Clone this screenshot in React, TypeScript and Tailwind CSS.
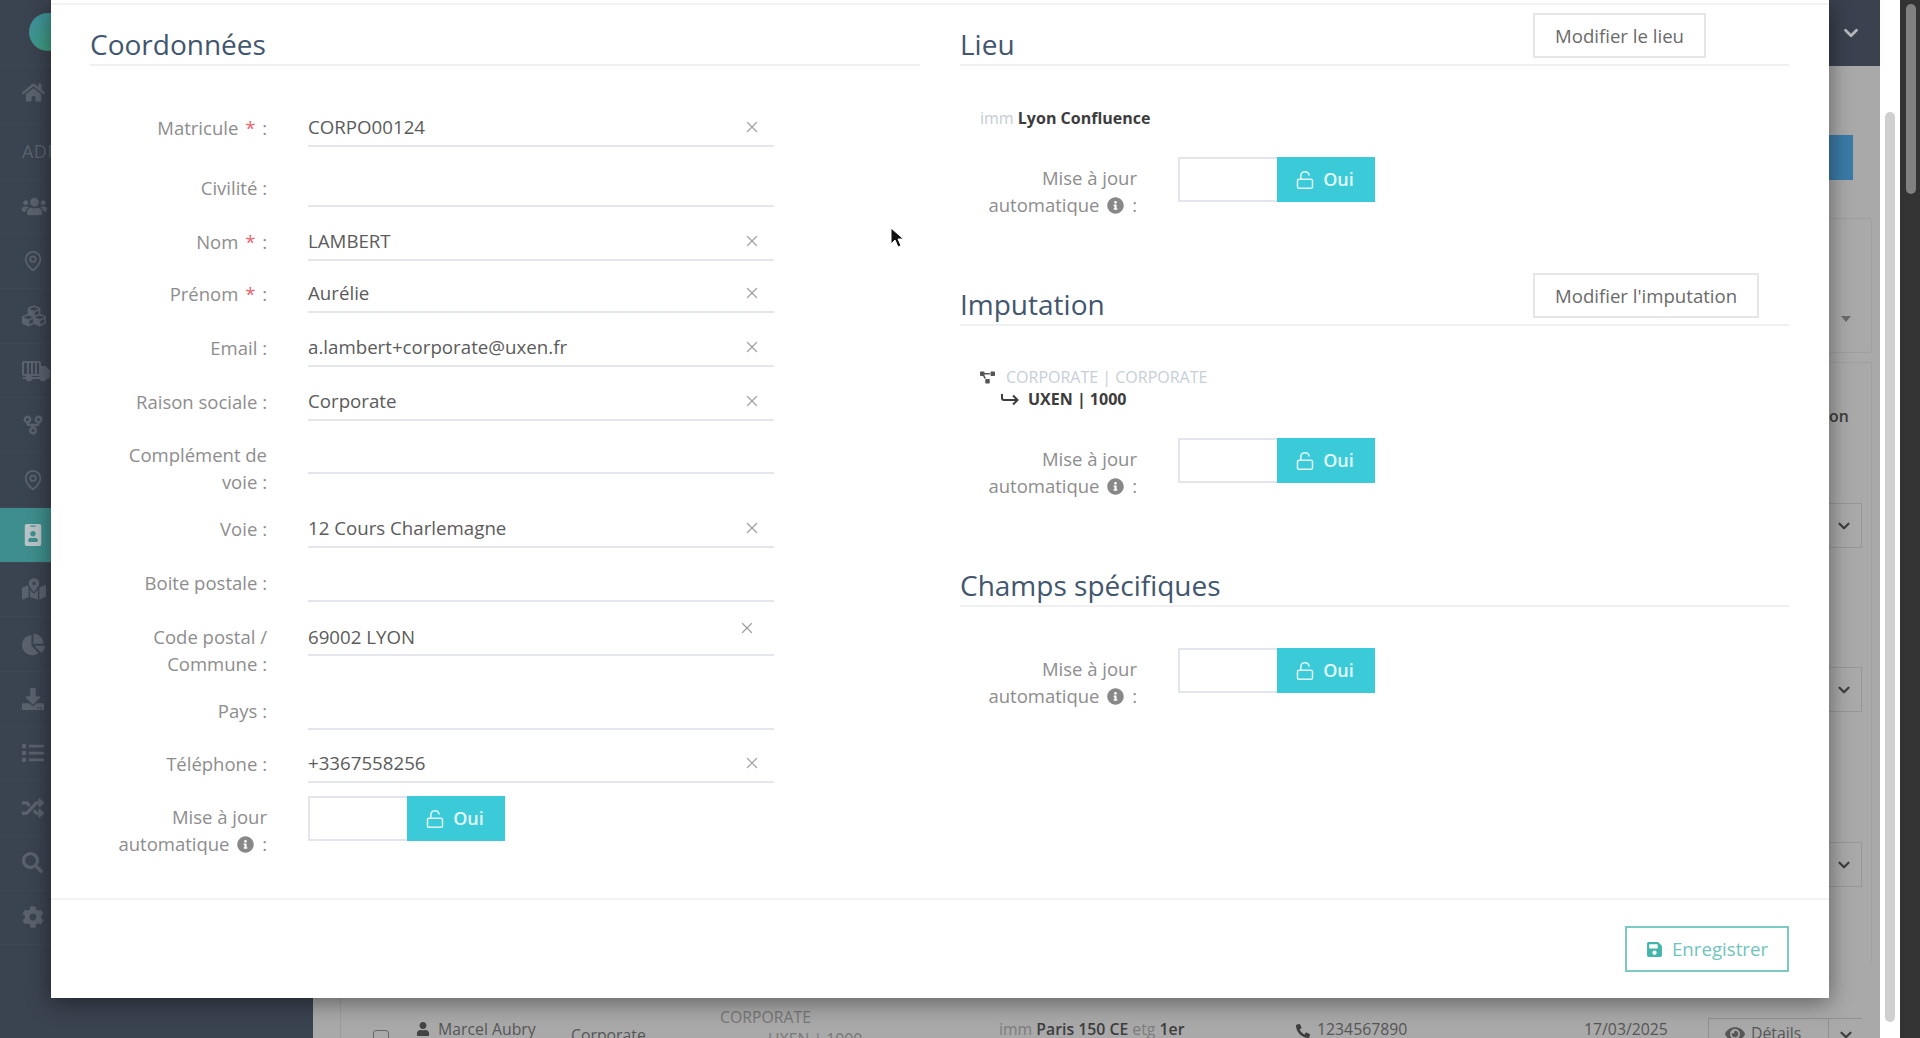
import React from 'react';
import { X, LockOpen, MapPin, ChevronDown, GitFork } from 'lucide-react';
import {
  FaHome, FaUsers, FaCubes, FaIdBadge, FaMapMarkedAlt, FaChartPie,
  FaDownload, FaList, FaRandom, FaSearch, FaCog, FaInfoCircle, FaSave, FaProjectDiagram, FaUser, FaPhone, FaEye,
} from 'react-icons/fa';

const fields = [
  { label: 'Matricule', required: true, value: 'CORPO00124', clear: true, row: 'h-[60px]' },
  { label: 'Civilité', value: '', row: 'h-[54px]' },
  { label: 'Nom', required: true, value: 'LAMBERT', clear: true, row: 'h-[52px]' },
  { label: 'Prénom', required: true, value: 'Aurélie', clear: true, row: 'h-[54px]' },
  { label: 'Email', value: 'a.lambert+corporate@uxen.fr', clear: true, row: 'h-[54px]' },
  { label: 'Raison sociale', value: 'Corporate', clear: true, row: 'h-[53px]' },
  { label: 'Complément de voie', value: '', row: 'h-[74px]' },
  { label: 'Voie', value: '12 Cours Charlemagne', clear: true, row: 'h-[54px]' },
  { label: 'Boite postale', value: '', row: 'h-[54px]' },
  { label: 'Code postal / Commune', value: '69002 LYON', clear: true, shifted: true, row: 'h-[74px]' },
  { label: 'Pays', value: '', row: 'h-[53px]' },
  { label: 'Téléphone', value: '+3367558256', clear: true, row: 'h-[53px]' },
];

function TruckIcon() {
  return (
    <svg width="28" height="22" viewBox="0 0 28 22" fill="none" stroke="currentColor" strokeWidth="2">
      <rect x="1" y="2" width="17" height="13" rx="1" />
      <path d="M6 3v11M10 3v11M14 3v11" />
      <path d="M18 7h5l4 4v5H18z" fill="currentColor" />
      <path d="M1 18h26" />
      <circle cx="7" cy="18" r="2.4" fill="currentColor" />
      <circle cx="21" cy="18" r="2.4" fill="currentColor" />
    </svg>
  );
}

function Sidebar() {
  return (
    <aside className="w-[313px] shrink-0 bg-[#3a4350] text-[#5a626e]">
      <div className="h-[66px] border-b border-[#3f4855] pl-[29px] pt-[13px]">
        <div className="h-[38px] w-[38px] rounded-full bg-gradient-to-br from-[#3f8fa0] to-[#41a274]" />
      </div>
      <SideRow first><FaHome size={23} /></SideRow>
      <SideRow><span className="text-[18px] tracking-wide">ADMIN</span></SideRow>
      <SideRow><FaUsers size={25} /></SideRow>
      <SideRow><MapPin size={22} strokeWidth={2} /></SideRow>
      <SideRow><FaCubes size={24} /></SideRow>
      <SideRow><TruckIcon /></SideRow>
      <SideRow><GitFork size={22} strokeWidth={2.6} /></SideRow>
      <SideRow><MapPin size={22} strokeWidth={2} /></SideRow>
      <SideRow active><FaIdBadge size={22} /></SideRow>
      <SideRow><FaMapMarkedAlt size={24} /></SideRow>
      <SideRow><FaChartPie size={23} /></SideRow>
      <SideRow><FaDownload size={22} /></SideRow>
      <SideRow><FaList size={22} /></SideRow>
      <SideRow><FaRandom size={22} /></SideRow>
      <SideRow><FaSearch size={21} /></SideRow>
      <SideRow><FaCog size={22} /></SideRow>
    </aside>
  );
}

function SideRow({ children, active, first }: { children: React.ReactNode; active?: boolean; first?: boolean }) {
  return (
    <div
      className={`flex items-center border-b border-[#3e4754] pl-[22px] ${first ? 'h-[59px] pb-[6px]' : 'h-[54.7px]'} ${
        active ? 'bg-[#3e8e8d] text-[#b9c4c6]' : ''
      }`}
    >
      {children}
    </div>
  );
}

function PageBehind() {
  return (
    <main className="relative min-w-0 flex-1 bg-[#a9a9a9] text-[15.8px] text-[#565656]">
      <div className="flex h-[66px] items-center justify-end bg-[#3a424f] pr-[18px] text-[#b4b8bd]">
        <ChevronDown size={22} strokeWidth={3} />
      </div>
      <div className="absolute right-[27px] top-[135px] h-[45px] w-[100px] bg-[#3a7ba6]" />
      <div className="absolute right-[8px] top-[218px] h-[135px] w-[100px] rounded-[3px] border border-[#9f9f9f]">
        <span className="absolute right-[20px] top-[97px] h-0 w-0 border-x-[5px] border-t-[6px] border-x-transparent border-t-[#6b6b6b]" />
      </div>
      <div className="absolute right-[8px] top-[362px] h-[600px] w-[100px] border-x border-t border-[#a0a0a0]" />
      <span className="absolute left-[1516px] top-[405px] font-semibold text-[#3c3c3c]">on</span>
      {[503, 667, 842].map((top, i) => (
        <div
          key={top}
          className={`absolute right-[18px] flex h-[45px] w-[60px] items-center justify-end border border-[#979797] pr-[8px] text-[#3f3f3f] ${
            i === 0 ? 'top-[503px]' : i === 1 ? 'top-[667px]' : 'top-[842px]'
          }`}
        >
          <ChevronDown size={18} strokeWidth={3} />
        </div>
      ))}
      {/* table row peeking out under the modal */}
      <div className="absolute left-[27px] right-[18px] top-[998px] flex h-[40px] items-start overflow-hidden border-l border-[#9c9c9c]">
        <div className="ml-[32px] mt-[32px] h-[16px] w-[16px] rounded-[3px] border border-[#666]" />
        <FaUser size={14} className="ml-[27px] mt-[24px] text-[#444]" />
        <span className="ml-[8px] mt-[20px] whitespace-nowrap">Marcel Aubry</span>
        <span className="absolute left-[230px] top-[26px]">Corporate</span>
        <span className="absolute left-[379px] top-[8px] text-[#777]">CORPORATE</span>
        <span className="absolute left-[427px] top-[30px] whitespace-nowrap text-[#777]">UXEN | 1000</span>
        <span className="absolute left-[658px] top-[20px] whitespace-nowrap text-[#7d7d7d]">
          imm <b className="font-semibold text-[#3e3e3e]">Paris 150 CE</b> etg <b className="font-semibold text-[#3e3e3e]">1er</b>
        </span>
        <FaPhone size={14} className="absolute left-[955px] top-[26px] -scale-x-100 text-[#3e3e3e]" />
        <span className="absolute left-[976px] top-[20px]">1234567890</span>
        <span className="absolute left-[1243px] top-[20px]">17/03/2025</span>
        <div className="absolute left-[1367px] top-[20px] flex h-[40px] w-[155px] border border-[#909090]">
          <span className="flex w-[120px] items-start gap-[6px] border-r border-[#909090] pl-[16px] pt-[3px]">
            <FaEye size={20} className="mt-[2px]" /> Détails
          </span>
          <span className="flex flex-1 justify-center pt-[7px] text-[#3f3f3f]">
            <ChevronDown size={18} strokeWidth={3} />
          </span>
        </div>
      </div>
    </main>
  );
}

function Scrollbars() {
  return (
    <>
      <div className="w-[20px] shrink-0 bg-white pl-[5px] pt-[112px]">
        <div className="h-[910px] w-[10px] rounded-full bg-[#cfcfcf]" />
      </div>
      <div className="w-[20px] shrink-0 bg-[#333333] pl-[6px] pt-[4px]">
        <div className="h-[190px] w-[10px] rounded-full bg-[#808080]" />
      </div>
    </>
  );
}

function SectionHeader({ title, action }: { title: string; action?: string }) {
  return (
    <div className="flex h-[54px] items-start border-b-2 border-[#eff0f3]">
      <h3 className="w-[573px] shrink-0 self-end pb-[1px] text-[28px] leading-[38px] text-[#42566e]">{title}</h3>
      {action && (
        <button className="mt-[1px] h-[45px] whitespace-nowrap border-2 border-[#e6e6e6] px-[20px] text-[18.6px] text-[#6a6a6a]">{action}</button>
      )}
    </div>
  );
}

function FieldLabel({ children }: { children: React.ReactNode }) {
  return <label className="ml-[12px] w-[165px] shrink-0 pt-[8px] text-right text-[18.5px] leading-[26.6px] text-[#8d8d8d]">{children}</label>;
}

function AutoUpdate({ rowClass }: { rowClass: string }) {
  return (
    <div className={`flex items-start ${rowClass}`}>
      <FieldLabel>
        Mise à jour automatique <FaInfoCircle size={17} className="mx-[3px] inline align-[-2px] text-[#888]" /> :
      </FieldLabel>
      <div className="ml-[41px] flex h-[45px] w-[197px] border-2 border-[#e3e5ee]">
        <div className="flex-1 bg-white" />
        <div className="-my-[2px] -mr-[2px] flex w-[98px] items-center justify-center gap-[8px] bg-[#3bcbd8] pr-[3px] text-[18px] font-semibold text-[#e2f8fa]">
          <LockOpen size={20} strokeWidth={1.8} />
          Oui
        </div>
      </div>
    </div>
  );
}

export default function App() {
  return (
    <div className="relative flex h-[1038px] w-[1920px] overflow-hidden font-['Open_Sans',sans-serif]">
      <Sidebar />
      <PageBehind />
      <Scrollbars />

      <div className="absolute left-[51px] top-0 flex h-[998px] w-[1778px] flex-col bg-white shadow-[0_4px_22px_rgba(0,0,0,0.45)]">
        <div className="h-[5px] shrink-0 border-b-2 border-[#f2f3f5]" />
        <div className="flex min-h-0 flex-1 gap-[40px] px-[39px] pt-[7px]">
          {/* Coordonnées */}
          <section className="w-[830px]">
            <SectionHeader title="Coordonnées" />
            <div className="pt-[41px]">
              {fields.map((f) => (
                <div key={f.label} className={`flex items-start ${f.row}`}>
                  <FieldLabel>
                    {f.label} {f.required && <span className="mx-[2px] text-[#e8636f]">*</span>} :
                  </FieldLabel>
                  <div className="ml-[41px] flex h-[40px] w-[466px] items-center justify-between border-b-2 border-[#e4e6ee] pt-[2px] text-[18.7px] text-[#5b5b5b]">
                    <span className={f.shifted ? 'mt-[2px]' : ''}>{f.value}</span>
                    {f.clear && (
                      <X
                        size={18}
                        strokeWidth={1.6}
                        className={f.shifted ? 'mb-[16px] mr-[18px] text-[#a2a2a2]' : 'mr-[13px] text-[#a2a2a2]'}
                      />
                    )}
                  </div>
                </div>
              ))}
              <AutoUpdate rowClass="h-[60px]" />
            </div>
          </section>

          {/* Lieu, imputation, champs spécifiques */}
          <section className="w-[829px]">
            <SectionHeader title="Lieu" action="Modifier le lieu" />
            <p className="ml-[20px] mt-[39px] h-[26px] text-[16px] leading-[26px] text-[#c3ccd5]">
              imm <b className="font-bold text-[#3c3c3c]">Lyon Confluence</b>
            </p>
            <AutoUpdate rowClass="mt-[26px] h-[115px]" />

            <SectionHeader title="Imputation" action="Modifier l'imputation" />
            <div className="ml-[20px] mt-[40px] text-[16px] leading-[22px]">
              <div className="flex items-center gap-[11px] text-[#c6cfd8]">
                <FaProjectDiagram size={15} className="text-[#555]" />
                <span>CORPORATE | CORPORATE</span>
              </div>
              <div className="flex items-center gap-[9px] pl-[21px] font-bold text-[#3c3c3c]">
                <svg width="18" height="14" viewBox="0 0 18 14" fill="none" stroke="currentColor" strokeWidth="2">
                  <path d="M1 2v4q0 2 2 2h13M12 3.5l4.5 4.5-4.5 4.5" />
                </svg>
                <span>UXEN | 1000</span>
              </div>
            </div>
            <AutoUpdate rowClass="mt-[28px] h-[115px]" />

            <SectionHeader title="Champs spécifiques" />
            <AutoUpdate rowClass="mt-[41px] h-[60px]" />
          </section>
        </div>

        <div className="flex h-[100px] shrink-0 items-center justify-end border-t-2 border-[#f2f3f5] pr-[40px]">
          <button className="flex h-[46px] w-[164px] items-center justify-center gap-[9px] border-2 border-[#7ccac4] text-[18.7px] text-[#72c3bc]">
            <FaSave size={17} className="text-[#43b5ac]" />
            Enregistrer
          </button>
        </div>
      </div>

      {/* mouse cursor */}
      <svg className="absolute left-[890px] top-[227px]" width="14" height="22" viewBox="0 0 14 22">
        <path d="M1 1v16l4-4 3 7 3-1.4-3-6.6h5.5z" fill="#111" stroke="#fff" strokeWidth="1" />
      </svg>
    </div>
  );
}
